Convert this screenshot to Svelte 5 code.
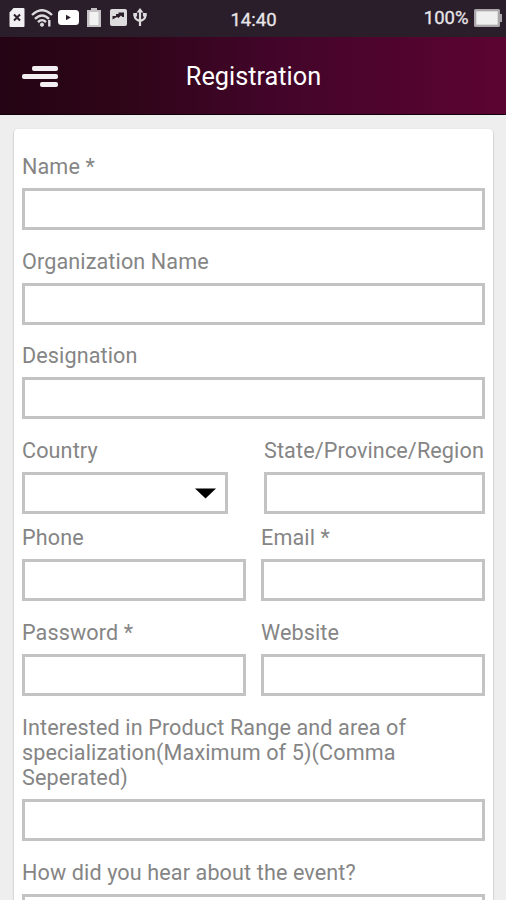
<script>

  // LOGIC
  let rows = [
    { type: 'full', fields: [{ id: 'name', label: 'Name *' }] },
    { type: 'full', fields: [{ id: 'organization', label: 'Organization Name' }] },
    { type: 'full', fields: [{ id: 'designation', label: 'Designation' }] },
    {
      type: 'location',
      fields: [
        { id: 'country', label: 'Country', select: true },
        { id: 'state', label: 'State/Province/Region' }
      ]
    },
    { type: 'half', fields: [{ id: 'phone', label: 'Phone' }, { id: 'email', label: 'Email *' }] },
    { type: 'half', fields: [{ id: 'password', label: 'Password *' }, { id: 'website', label: 'Website' }] },
    {
      type: 'full',
      fields: [{
        id: 'interests',
        label: 'Interested in Product Range and area of specialization(Maximum of 5)(Comma Seperated)'
      }]
    },
    { type: 'full', fields: [{ id: 'source', label: 'How did you hear about the event?' }] }
  ]

  let values = {}
</script>

<div class="screen">
  <div class="status_bar">
    <div class="status_icons">
      <svg width="16" height="19" viewBox="0 0 16 19">
        <path d="M4.5 0H14.5Q15.5 0 15.5 1V18Q15.5 19 14.5 19H1.5Q.5 19 .5 18V4.5Z" fill="#f1eff1"/>
        <path d="M5 6.5l6 6M11 6.5l-6 6" stroke="#2b1e2b" stroke-width="2"/>
      </svg>
      <svg class="wifi" width="22" height="18" viewBox="0 0 22 18" fill="none" stroke="#dedbde" stroke-width="2.4">
        <path d="M1 6Q11-3.5 21 6M4 9.8Q11 3 18 9.8M7 13.2Q11 9 15 13.2"/>
        <circle cx="11" cy="15.7" r="1.6" fill="#dedbde" stroke-width="1"/>
        <path d="M18.3 11v6.5" stroke-width="2.4"/>
      </svg>
      <svg class="video" width="21" height="15" viewBox="0 0 21 15">
        <rect width="21" height="15" rx="3.5" fill="#fff"/>
        <path d="M8 4.8v5.4l4.8-2.7z" fill="#2b1e2b"/>
      </svg>
      <svg class="cell" width="14" height="19" viewBox="0 0 14 19">
        <path d="M4 0h6v2h4v17H0V2h4z" fill="#c5c1c5"/>
        <path d="M2.5 4h9v13h-9z" fill="#f3f2f3"/>
      </svg>
      <svg class="image" width="17" height="17" viewBox="0 0 17 17">
        <rect width="17" height="17" rx="2" fill="#dedbde"/>
        <path d="M2.5 10.5V7H6V5H8.5V3.5H14V8H12.5L11 6.5L8.5 9L7 8Z" fill="#2b1e2b"/>
      </svg>
      <svg class="usb" width="14" height="19" viewBox="0 0 14 19" fill="none" stroke="#dedbde" stroke-width="2.2">
        <path d="M7 3v15M2 6v3.5Q2.5 11.5 7 13Q11.5 11.5 12 9.5V6"/>
        <path d="M7 0l3.5 4.5h-7zM.3 5h3.8v3.5H.3zM9.9 5h3.8v3.5H9.9z" fill="#dedbde" stroke="none"/>
      </svg>
    </div>
    <span class="clock">14:40</span>
    <div class="battery">
      <span>100%</span>
      <svg width="28" height="18" viewBox="0 0 28 18">
        <path d="M0 1.5Q0 0 1.5 0h23Q26 0 26 1.5V5h2v8h-2v3.5q0 1.5-1.5 1.5h-23Q0 18 0 16.5z" fill="#aaa6aa"/>
        <path d="M2.3 2.3h21.4v13.4H2.3z" fill="#f0eff0"/>
      </svg>
    </div>
  </div>

  <header class="app_bar">
    <button class="menu" aria-label="Menu">
      <span class="line medium"></span>
      <span class="line"></span>
      <span class="line short"></span>
    </button>
    <h1>Registration</h1>
  </header>

  <main>
    <form class="card">
      {#each rows as row}
        <div class="row {row.type}">
          {#each row.fields as field}
            <div class="field">
              <label for={field.id}>{field.label}</label>
              {#if field.select}
                <button type="button" id={field.id} class="control select" aria-label={field.label}>
                  <svg width="21" height="11" viewBox="0 0 21 11">
                    <path d="M0 .5h21L10.5 10.5z" fill="#000"/>
                  </svg>
                </button>
              {:else}
                <input id={field.id} class="control" bind:value={values[field.id]}>
              {/if}
            </div>
          {/each}
        </div>
      {/each}
    </form>
  </main>
</div>

<style>
  :global(body) {
    overflow: hidden;
    font-family: Roboto, "Liberation Sans", sans-serif;
  }

  .screen {
    display: flex;
    flex-direction: column;
    height: 900px;
    overflow: hidden;
    background: #eee;
  }

  .status_bar {
    display: grid;
    grid-template-columns: 1fr auto 1fr;
    align-items: center;
    flex: none;
    box-sizing: border-box;
    height: 37px;
    padding: 0 4.5px 2px 8.5px;
    background: #2b1e2b;
    color: #e8e5e8;
    font-size: 18.5px;
  }

  .status_icons {
    display: flex;
    align-items: center;
  }

  .wifi {
    margin-left: 6px;
  }

  .video {
    margin-left: 5px;
  }

  .cell {
    margin-left: 8px;
  }

  .image {
    margin-left: 9px;
  }

  .usb {
    margin-left: 6px;
  }

  .clock {
    padding: 4px 3px 0 0;
    -webkit-text-stroke: 0.3px;
  }

  .battery {
    display: flex;
    align-items: center;
    justify-content: flex-end;
    gap: 5px;
    -webkit-text-stroke: 0.3px;
  }

  .app_bar {
    display: grid;
    grid-template-columns: 1fr auto 1fr;
    align-items: center;
    flex: none;
    box-sizing: border-box;
    height: 78px;
    padding: 2px 21px 0 22px;
    border-bottom: 1px solid #12000a;
    background: linear-gradient(90deg, #240414, #2f0518 25%, #43052a 55%, #5c0431);
  }

  .menu {
    display: flex;
    flex-direction: column;
    align-items: flex-end;
    gap: 3.5px;
    width: 36px;
    padding: 0;
    border: 0;
    background: none;
  }

  .line {
    width: 36px;
    height: 4.5px;
    border-radius: 2px;
    background: #f3eef1;
  }

  .line.medium {
    width: 26px;
  }

  .line.short {
    width: 18px;
  }

  h1 {
    margin: 0;
    color: #fff;
    font-size: 25.3px;
    font-weight: 400;
  }

  main {
    padding: 13.5px 13px 0 14px;
  }

  .card {
    padding: 25.5px 8px 40px;
    border-radius: 4px;
    background: #fff;
    box-shadow: 0 1px 2px rgba(0, 0, 0, 0.35);
  }

  .row {
    display: grid;
    margin-bottom: 18.7px;
  }

  .row.location {
    grid-template-columns: 206px 221px;
    justify-content: space-between;
    margin-bottom: 11.4px;
  }

  .row.half {
    grid-template-columns: 1fr 1fr;
    gap: 15px;
  }

  label {
    display: block;
    margin-bottom: 8.7px;
    color: #858585;
    font-size: 21.6px;
    line-height: 25.3px;
    letter-spacing: 0.11px;
  }

  .control {
    display: block;
    box-sizing: border-box;
    width: 100%;
    height: 42px;
    padding: 0 9px;
    border: 3px solid #c3c3c3;
    border-radius: 0;
    background: #fff;
    font: inherit;
    font-size: 20px;
    outline: none;
  }

  .select {
    display: flex;
    align-items: center;
    justify-content: flex-end;
  }
</style>
